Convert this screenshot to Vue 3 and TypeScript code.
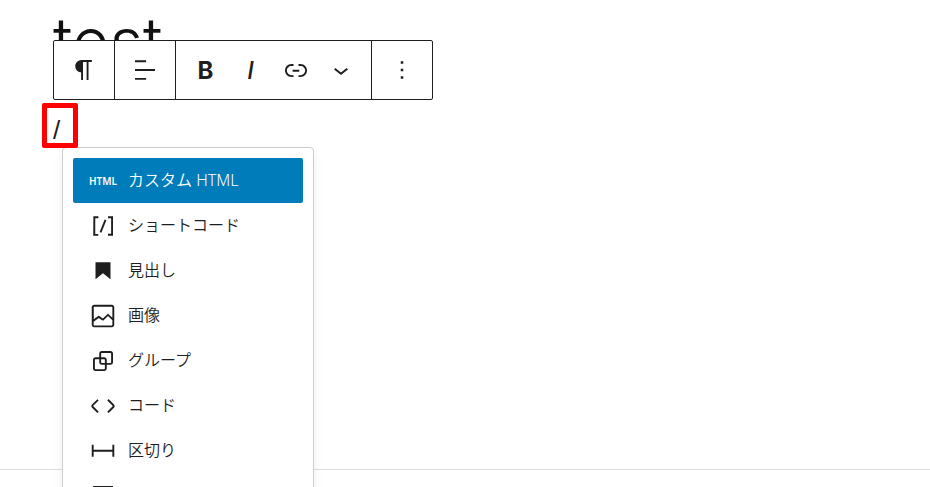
<script setup lang="ts">
import { ref } from 'vue'

interface BlockItem {
  name: string
  label?: string
  path?: string
  badge?: string
}

const icons = {
  paragraph:
    'M18.3 4H9.9v-.1l-.9.2c-2.3.4-4 2.4-4 4.8s1.7 4.4 4 4.8l.7.1V20h1.5V5.5h2.9V20h1.5V5.5h2.7V4z',
  align:
    'M4 19.8h8.9v-1.5H4v1.5zm8.9-15.6H4v1.5h8.9V4.2zm-8.9 7v1.5h16v-1.5H4z',
  link: 'M15.6 7.2H14v1.5h1.6c2 0 3.7 1.7 3.7 3.7s-1.7 3.7-3.7 3.7H14v1.5h1.6c2.8 0 5.2-2.3 5.2-5.2 0-2.9-2.3-5.2-5.2-5.2zM4.7 12.4c0-2 1.7-3.7 3.7-3.7H10V7.2H8.4c-2.9 0-5.2 2.3-5.2 5.2 0 2.9 2.3 5.2 5.2 5.2H10v-1.5H8.4c-2 0-3.7-1.7-3.7-3.7zm4.6.9h5.3v-1.5H9.3v1.5z',
  chevron: 'M17.5 11.6L12 16l-5.5-4.4.9-1.2L12 14l4.5-3.6 1 1.2z',
  more: 'M13 19h-2v-2h2v2zm0-6h-2v-2h2v2zm0-6h-2V5h2v2z',
}

const blocks: BlockItem[] = [
  { name: 'html', label: 'カスタム HTML', badge: 'HTML' },
  {
    name: 'shortcode',
    label: 'ショートコード',
    path: 'M16 4.2v1.5h2.5v12.5H16v1.5h4V4.2h-4zM4.2 19.8h4v-1.5H5.8V5.8h2.5V4.2h-4l-.1 15.6zm5.1-3.1l1.4.6 4-10-1.4-.6-4 10z',
  },
  {
    name: 'heading',
    label: '見出し',
    path: 'M6 5v13.6l6-4.75 6 4.75V5H6z',
  },
  {
    name: 'image',
    label: '画像',
    path: 'M19 3H5c-1.1 0-2 .9-2 2v14c0 1.1.9 2 2 2h14c1.1 0 2-.9 2-2V5c0-1.1-.9-2-2-2zM5 4.5h14c.3 0 .5.2.5.5v8.4l-3-2.9c-.3-.3-.8-.3-1 0L11.9 14 9 12c-.3-.2-.6-.2-.8 0l-3.6 2.6V5c-.1-.3.1-.5.4-.5zm14 15H5c-.3 0-.5-.2-.5-.5v-2.4l4.1-3 3 1.9c.3.2.7.2.9-.1L16 12l3.5 3.4V19c0 .3-.2.5-.5.5z',
  },
  {
    name: 'group',
    label: 'グループ',
    path: 'M18 4h-7c-1.1 0-2 .9-2 2v3H6c-1.1 0-2 .9-2 2v7c0 1.1.9 2 2 2h7c1.1 0 2-.9 2-2v-3h3c1.1 0 2-.9 2-2V6c0-1.1-.9-2-2-2zm-4.5 14c0 .3-.2.5-.5.5H6c-.3 0-.5-.2-.5-.5v-7c0-.3.2-.5.5-.5h3V13c0 1.1.9 2 2 2h2.5v3zm0-4.5H11c-.3 0-.5-.2-.5-.5v-2.5H13c.3 0 .5.2.5.5v2.5zm5-.5c0 .3-.2.5-.5.5h-3V11c0-1.1-.9-2-2-2h-2.5V6c0-.3.2-.5.5-.5h7c.3 0 .5.2.5.5v7z',
  },
  {
    name: 'code',
    label: 'コード',
    path: 'M20.8 10.7l-4.3-4.3-1.1 1.1 4.3 4.3c.1.1.1.3 0 .4l-4.3 4.3 1.1 1.1 4.3-4.3c.7-.8.7-1.9 0-2.6zM4.2 11.8l4.3-4.3-1-1-4.3 4.3c-.7.7-.7 1.8 0 2.5l4.3 4.3 1.1-1.1-4.3-4.3c-.2-.1-.2-.3-.1-.4z',
  },
  {
    name: 'separator',
    label: '区切り',
    path: 'M4.5 12.5v4H3V7h1.5v3.987h15V7H21v9.5h-1.5v-4h-15Z',
  },
  {
    name: 'pullquote',
    path: 'M4 4h16v1.5H4zM4 18.5h16V20H4zM6 8h12v8H6z',
  },
]

const selected = ref('html')
</script>

<template>
  <main class="editor">
    <article class="canvas">
      <h1 class="title">test</h1>
      <div class="block">
        <div class="toolbar" role="toolbar" aria-label="ブロックツール">
          <div class="group">
            <button class="tool wide" type="button" aria-label="段落">
              <svg class="icon" viewBox="0 0 24 24"><path :d="icons.paragraph" /></svg>
            </button>
          </div>
          <div class="group">
            <button class="tool wide" type="button" aria-label="配置">
              <svg class="icon" viewBox="0 0 24 24"><path :d="icons.align" /></svg>
            </button>
          </div>
          <div class="group formats">
            <button class="tool letter bold" type="button" aria-label="太字">B</button>
            <button class="tool letter italic" type="button" aria-label="イタリック">I</button>
            <button class="tool" type="button" aria-label="リンク">
              <svg class="icon" viewBox="0 0 24 24"><path :d="icons.link" /></svg>
            </button>
            <button class="tool" type="button" aria-label="さらに表示">
              <svg class="icon" viewBox="0 0 24 24"><path :d="icons.chevron" /></svg>
            </button>
          </div>
          <div class="group">
            <button class="tool wide" type="button" aria-label="オプション">
              <svg class="icon" viewBox="0 0 24 24"><path :d="icons.more" /></svg>
            </button>
          </div>
        </div>

        <p class="paragraph">/</p>

        <div class="inserter" role="listbox" aria-label="ブロック">
          <button
            v-for="item in blocks"
            :key="item.name"
            class="option"
            :class="{ selected: item.name === selected }"
            type="button"
            role="option"
            :aria-label="item.label ?? item.name"
            :aria-selected="item.name === selected"
            @click="selected = item.name"
          >
            <span v-if="item.badge" class="badge">{{ item.badge }}</span>
            <svg v-else class="icon" viewBox="0 0 24 24"><path :d="item.path" /></svg>
            <span v-if="item.label" class="label">{{ item.label }}</span>
          </button>
        </div>
        <div class="marker"></div>
      </div>
    </article>
    <footer class="panel"></footer>
  </main>
</template>

<style>
body {
  margin: 0;
  background: #fff;
}
</style>

<style scoped>
.editor {
  display: flex;
  flex-direction: column;
  height: 100vh;
  overflow: hidden;
  color: #1e1e1e;
  font-family: 'Noto Sans', 'Noto Sans CJK JP', sans-serif;
}

.canvas {
  flex: 1;
  padding: 0 53px;
}

.title {
  margin: 0;
  height: 100px;
  font-family: Inter, sans-serif;
  font-size: 65px;
  font-weight: 300;
  line-height: 84px;
  color: #111;
}

.block {
  position: relative;
}

.toolbar {
  position: absolute;
  bottom: 100%;
  left: 0;
  display: flex;
  border: 1px solid #1e1e1e;
  border-radius: 2px;
  background: #fff;
}

.group {
  display: flex;
}

.group + .group {
  border-left: 1px solid #1e1e1e;
}

.formats {
  padding: 0 8px 0 7px;
}

.tool {
  display: flex;
  align-items: center;
  justify-content: center;
  box-sizing: border-box;
  width: 45px;
  height: 58px;
  padding: 0;
  border: 0;
  background: none;
  color: inherit;
}

.wide {
  width: 60px;
}

.letter {
  padding-top: 2px;
  font-family: Inter, sans-serif;
  font-size: 24px;
  line-height: 30px;
}

.bold {
  font-weight: 700;
}

.italic {
  font-style: italic;
  font-weight: 500;
}

.icon {
  flex: none;
  width: 30px;
  height: 30px;
  fill: currentColor;
}

.paragraph {
  margin: 0;
  padding-top: 11px;
  font-family: 'Liberation Sans', sans-serif;
  font-size: 26px;
  line-height: 38px;
}

.marker {
  position: absolute;
  top: 3px;
  left: -11px;
  box-sizing: border-box;
  width: 36px;
  height: 45px;
  border: 5px solid #f00;
  border-radius: 2px;
}

.inserter {
  position: absolute;
  top: 47px;
  left: 9px;
  box-sizing: border-box;
  width: 252px;
  padding: 10px;
  border: 1px solid #ccc;
  border-radius: 4px;
  background: #fff;
  box-shadow: 0 4px 12px rgba(0, 0, 0, 0.06);
}

.option {
  display: flex;
  align-items: center;
  gap: 10px;
  box-sizing: border-box;
  width: 100%;
  height: 45px;
  padding: 0 15px;
  border: 0;
  border-radius: 2px;
  background: none;
  color: inherit;
  font-family: inherit;
  font-size: 16px;
  font-weight: 350;
  line-height: 24px;
  text-align: left;
}

.label {
  padding-bottom: 2px;
}

.selected {
  background: #007cba;
  color: #fff;
}

.badge {
  width: 30px;
  font-size: 10px;
  font-weight: 600;
  text-align: center;
}

.panel {
  height: 17px;
  border-top: 1px solid #ddd;
}
</style>
